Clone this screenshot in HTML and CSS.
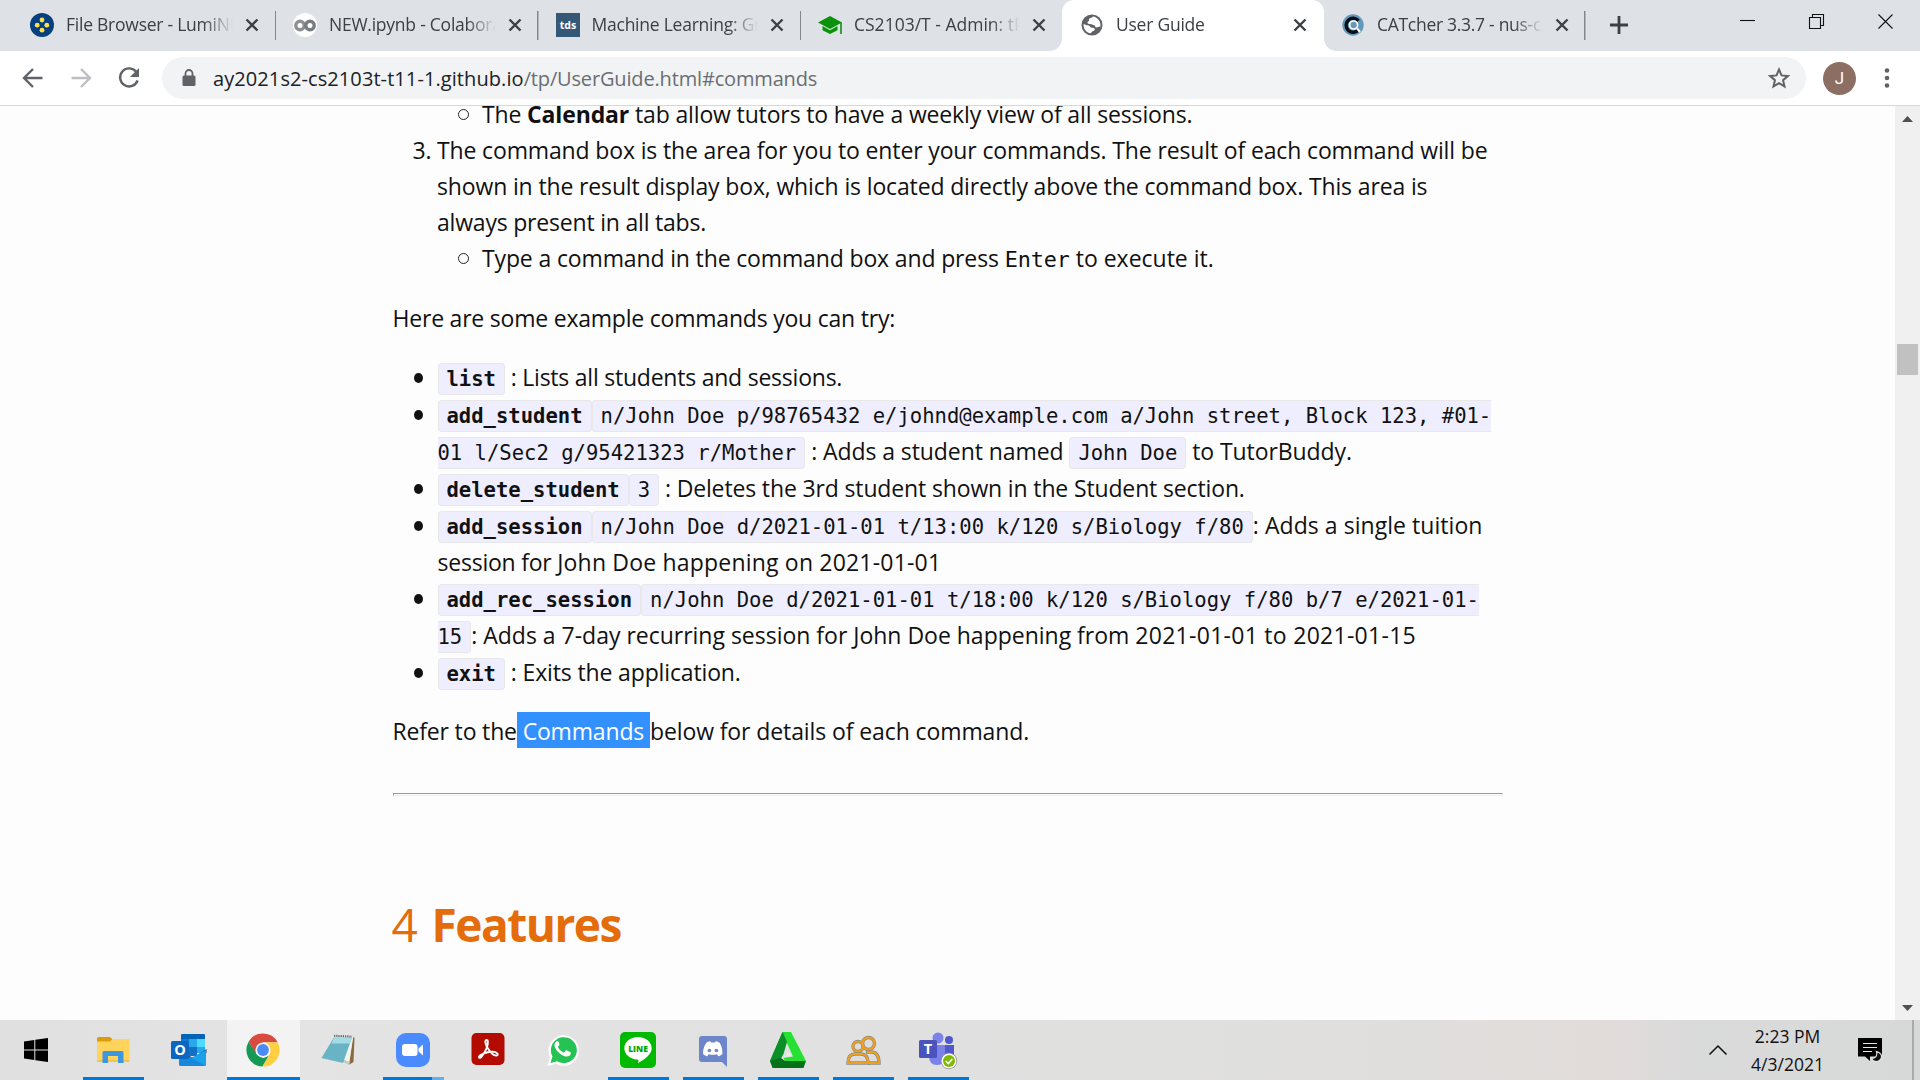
FILE: index.html
```html
<!DOCTYPE html>
<html lang="en">
<head>
<meta charset="utf-8">
<title>User Guide</title>
<link rel="stylesheet" href="styles.css">
</head>
<body>
<div class="screen">
  <header class="tabstrip">
    <div class="tab">
      <svg class="fav" viewBox="0 0 24 24"><circle cx="12" cy="12" r="12" fill="#06407e"/><g fill="#ffdf4f"><circle cx="12" cy="7" r="2.4"/><circle cx="7.2" cy="12.2" r="2.4"/><circle cx="16.8" cy="12.2" r="2.4"/><circle cx="12" cy="17.2" r="2.4"/></g></svg>
      <span class="title">File Browser - LumiNUS</span>
      <svg class="close" viewBox="0 0 14 14"><path d="M1.5 1.5l11 11M12.5 1.5l-11 11"/></svg>
    </div>
    <div class="tab">
      <svg class="fav" viewBox="0 0 24 24"><circle cx="12" cy="12" r="12" fill="#fff"/><g fill="none" stroke-width="3.400"><circle cx="7" cy="12.5" r="4.2" stroke="#8d9194"/><circle cx="17" cy="12.5" r="4.2" stroke="#777c80"/></g></svg>
      <span class="title">NEW.ipynb - Colaboratory</span>
      <svg class="close" viewBox="0 0 14 14"><path d="M1.5 1.5l11 11M12.5 1.5l-11 11"/></svg>
    </div>
    <div class="tab">
      <svg class="fav" viewBox="0 0 24 24"><rect width="24" height="24" fill="#355876"/><text x="12" y="15.6" text-anchor="middle" class="tds">tds</text></svg>
      <span class="title">Machine Learning: Gradient</span>
      <svg class="close" viewBox="0 0 14 14"><path d="M1.5 1.5l11 11M12.5 1.5l-11 11"/></svg>
    </div>
    <div class="tab last">
      <svg class="fav" viewBox="0 0 24 24"><path fill="#0a930a" d="M12 3L0 9.5 12 16l12-6.500zM4.500 13v4.300L12 21l7.500-3.700V13L12 17.300z"/><path stroke="#0a930a" stroke-width="1.600" d="M23 9.500V21"/></svg>
      <span class="title t-cs">CS2103/T - Admin: tP</span>
      <svg class="close" viewBox="0 0 14 14"><path d="M1.5 1.5l11 11M12.5 1.5l-11 11"/></svg>
    </div>
    <div class="tab active">
      <svg class="fav" viewBox="0 0 24 24"><circle cx="12" cy="12" r="10.500" fill="#5f6368"/><path fill="#fff" d="M13.500 3.600c-1 .3-1.500 1.400-3 1.400-1.200 0-1.800 1-1.400 2.200.4 1.100-1.700.9-1.700 2.300 0 1.300 1.400 1.500 3 1.500 1.700 0 2.100 1 3.300 1.100 1.600.1 1 2.100 2.300 2.300 1.300.1 2.300-.8 4.500-.8.4-4.800-2.300-8.800-7-10zM3.600 11c-.3 4.500 2 8 6.400 9.200 1.400.2 1.400-1.100 2.300-1.700 1-.7 2.500-.8 2.500-2.300 0-1.300-1.700-1.500-3.100-1.500-1.500 0-1.400-2-3-2.300-1.700-.3-3.300-.6-5.100-1.400z"/></svg>
      <span class="title">User Guide</span>
      <svg class="close" viewBox="0 0 14 14"><path d="M1.5 1.5l11 11M12.5 1.5l-11 11"/></svg>
    </div>
    <div class="tab">
      <svg class="fav" viewBox="0 0 24 24"><circle cx="12" cy="12" r="10.700" fill="#6299bb"/><path d="M17.500 7.800A7 7 0 1 0 17.600 16.600" fill="none" stroke="#0a0f14" stroke-width="3.400"/><circle cx="12.600" cy="12" r="4" fill="#6299bb" stroke="#fff" stroke-width="1.700"/><path d="M16 15.500l3 3.500" stroke="#fff" stroke-width="2"/></svg>
      <span class="title t-cat">CATcher 3.3.7 - nus-cs2103</span>
      <svg class="close" viewBox="0 0 14 14"><path d="M1.5 1.5l11 11M12.5 1.5l-11 11"/></svg>
    </div>
    <svg class="newtab" viewBox="0 0 18 18"><path d="M9 0v18M0 9h18"/></svg>
    <div class="winbtns">
      <svg width="16" height="16" viewBox="0 0 16 16"><path d="M0 4.500h15"/></svg>
      <svg width="16" height="16" viewBox="0 0 16 16"><path d="M.5 3.500h11v11h-11zM3.500 3.500v-3h11v11h-3"/></svg>
      <svg class="x" width="16" height="16" viewBox="0 0 16 16"><path d="M.5.500l14 14M14.500.500l-14 14"/></svg>
    </div>
  </header>

  <div class="toolbar">
    <nav class="nav">
      <svg width="24" height="24" viewBox="0 0 24 24"><path d="M21.500 12H4M12 3L3 12l9 9"/></svg>
      <svg class="dim" width="24" height="24" viewBox="0 0 24 24"><path d="M2.500 12H20M12 3l9 9-9 9"/></svg>
      <svg width="24" height="24" viewBox="0 0 24 24"><path d="M19.500 6.200A9 9 0 1 0 20.600 14.500"/><path class="solid" d="M22 2v9h-9z"/></svg>
    </nav>
    <div class="omnibox">
      <svg class="lock" width="14" height="18" viewBox="0 0 14 18"><rect x="0.500" y="6.500" width="13" height="10.500" rx="1.500" fill="#5f6368"/><path d="M3.500 7V4.500a3.500 3.500 0 0 1 7 0V7" fill="none" stroke="#5f6368" stroke-width="1.800"/></svg>
      <span class="url"><span class="host">ay2021s2-cs2103t-t11-1.github.io</span><span class="path">/tp/UserGuide.html#commands</span></span>
      <svg class="star" width="22" height="22" viewBox="0 0 22 22"><path d="M11 2.500l2.500 5.900 6.400.55-4.850 4.200 1.450 6.250L11 16.100l-5.500 3.300 1.450-6.250L2.100 8.950l6.400-.55z"/></svg>
    </div>
    <div class="avatar">J</div>
    <svg class="kebab" width="6" height="20" viewBox="0 0 6 20"><circle cx="3" cy="2.500" r="2.300"/><circle cx="3" cy="10" r="2.300"/><circle cx="3" cy="17.500" r="2.300"/></svg>
  </div>

  <div class="viewport">
    <main class="doc">
      <div class="ordered">
        <div class="row nested"><i class="ring"></i>The <b>Calendar</b> tab allow tutors to have a weekly view of all sessions.</div>
        <div class="row item"><span class="num">3.</span>The command box is the area for you to enter your commands. The result of each command will be</div>
        <div class="row item">shown in the result display box, which is located directly above the command box. This area is</div>
        <div class="row item snug">always present in all tabs.</div>
        <div class="row nested"><i class="ring"></i>Type a command in the command box and press <kbd>Enter</kbd><span class="even"> to execute it.</span></div>
      </div>
      <p class="row intro">Here are some example commands you can try:</p>
      <ul class="cmds">
        <li><i class="dot"></i><div class="row"><code><b>list</b></code><span class="tight"> : Lists all students and sessions.</span></div></li>
        <li><i class="dot"></i>
          <div class="row"><code><b>add_student</b></code><code class="open">n/John Doe p/98765432 e/johnd@example.com a/John street, Block 123, #01-</code></div>
          <div class="row"><code class="tail">01 l/Sec2 g/95421323 r/Mother</code><span class="loose"> : Adds a student named </span><code>John Doe</code><span class="loose"> to TutorBuddy.</span></div>
        </li>
        <li><i class="dot"></i><div class="row"><code><b>delete_student</b></code><code>3</code> : Deletes the 3rd student shown in the Student section.</div></li>
        <li><i class="dot"></i>
          <div class="row"><code><b>add_session</b></code><code>n/John Doe d/2021-01-01 t/13:00 k/120 s/Biology f/80</code><span class="wide">: Adds a single tuition</span></div>
          <div class="row plain"><span class="tight">session for </span><span class="date">John Doe happening on 2021-01-01</span></div>
        </li>
        <li><i class="dot"></i>
          <div class="row"><code><b>add_rec_session</b></code><code class="open">n/John Doe d/2021-01-01 t/18:00 k/120 s/Biology f/80 b/7 e/2021-01-</code></div>
          <div class="row"><code class="tail">15</code><span class="even">: Adds a 7-day recurring session for John Doe happening from </span><span class="dates">2021-01-01 to 2021-01-15</span></div>
        </li>
        <li><i class="dot"></i><div class="row"><code><b>exit</b></code> : Exits the application.</div></li>
      </ul>
      <p class="row refer"><span class="lead">Refer to the</span><span class="sel"> Commands </span>below for details of each command.</p>
      <hr>
      <h1><span class="no">4</span><b>Features</b></h1>
    </main>
    <div class="scrollbar">
      <svg width="11" height="6" viewBox="0 0 11 6"><path d="M0 6L5.500 0 11 6z"/></svg>
      <div class="thumb"></div>
      <svg width="11" height="6" viewBox="0 0 11 6"><path d="M0 0L5.500 6 11 0z"/></svg>
    </div>
  </div>

  <footer class="taskbar">
    <div class="slot start"><svg width="24" height="24" viewBox="0 0 24 24"><path d="M0 3.500L10.300 2v9.400H0zM11.300 1.800L24 0v11.400H11.300zM0 12.500h10.300v9.400L0 20.500zM11.300 12.500H24V24l-12.700-1.800z"/></svg></div>
    <div class="slot run"><svg width="36" height="36" viewBox="0 0 36 36"><path fill="#dc9c0a" d="M2 6.500Q2 5 3.500 5H15l2.500 2.500L15 11H2z"/><path fill="#ffd35c" d="M2 9.500h13l2.500-2.500H33q1.500 0 1.500 1.500v20q0 1.500-1.500 1.500H2z"/><path fill="#f6c343" d="M2 28h32.500v1q0 1-1.500 1H3.500Q2 30 2 28z"/><path fill="#3d97e0" d="M7.500 31V20.500Q7.500 19 9 19h18q1.500 0 1.500 1.500V31H23v-7H13v7z"/></svg></div>
    <div class="slot"><svg width="36" height="36" viewBox="0 0 36 36"><path fill="#0364b8" d="M11 3q0-1 1-1h22q1 0 1 1v5H11z"/><path fill="#0f78d4" d="M11 7h8v16h-8z"/><path fill="#28a8ea" d="M19 7h8v8h-8z"/><path fill="#50d9ff" d="M27 7h8v8h-8z"/><path fill="#1470c4" d="M19 15h8v9h-8z"/><path fill="#28a8ea" d="M27 15h8v6h-8z"/><path fill="#0a3f78" d="M9 18l14 8 13.500-9v4L23 30 9 24z"/><path fill="#1ba0ea" d="M36 18v15q0 1-1 1H11q-2 0-2-2v-6l14-1z"/><path fill="#1688dc" d="M9 19l25.500 14.500q-.5.500-1.500.5H11q-2 0-2-2z"/><rect x="1" y="9" width="18" height="18" rx="1.500" fill="#0a66c0"/><text x="10" y="23" text-anchor="middle" class="glyph g14">O</text></svg></div>
    <div class="slot run current"><svg width="36" height="36" viewBox="-18 -18 36 36"><path fill="#db4a3e" d="M-14.400-8.300A16.600 16.600 0 0 1 14.700-7.700H0L-7.200 4z"/><path fill="#ffcf43" d="M14.700-7.700A16.600 16.600 0 0 1-.7 16.600L6.600 4 3-7.700z"/><path fill="#159a56" d="M-.7 16.600A16.600 16.600 0 0 1-14.400-8.300L-6.600 4 0 8 5.500 6z"/><circle r="7.600" fill="#f4f4f4"/><circle r="5.900" fill="#4c8bf5"/></svg></div>
    <div class="slot"><svg width="36" height="36" viewBox="0 0 36 36"><path fill="#8b6b3d" d="M33 5l1.500 1-1 24-5 3z"/><path fill="#f3f3ee" d="M31.500 4.500L33 6l-4 27-9-3z"/><path fill="#c8cac6" d="M20 29l9 4 .5-3-7-3z"/><path fill="#69b4c4" d="M14.500 4.500l17.500 1L23 31 1.500 26z"/><path fill="#a4dbe4" d="M14.500 4.500l17.500 1-2 6-18.500 0z"/><path stroke="#666" stroke-width="2" stroke-dasharray="1.200 1" d="M14 3.700l18 .8"/></svg></div>
    <div class="slot run multi"><svg width="36" height="36" viewBox="0 0 36 36"><rect x="1" y="1" width="34" height="34" rx="10" fill="#4a8cff"/><rect x="7" y="12" width="15.500" height="12" rx="3" fill="#fff"/><path fill="#fff" d="M23.500 16.500L28 12.500v11l-4.500-4z"/></svg></div>
    <div class="slot"><svg width="36" height="36" viewBox="0 0 36 36"><rect x="1.500" y="1" width="33" height="32" rx="5" fill="#b30b00"/><path fill="none" stroke="#fff" stroke-width="1.900" stroke-linejoin="round" d="M16.500 8c-2.200 0-.8 5.200 1.300 8.300 2.700 4.300 6.300 7.700 8.900 7.200 2.500-.8.300-3.800-4.200-3.800-5.500.1-9.500 1.600-12.200 3.600-2.500 2-.9 3.600.9 1.700 3.600-3.900 7.200-11.500 6.700-15.500-.1-1-.6-1.500-1.400-1.500z"/></svg></div>
    <div class="slot"><svg width="36" height="36" viewBox="0 0 36 36"><path fill="#fff" d="M2.500 34l2.500-8.800A15.300 15.300 0 1 1 11 31.700z"/><path fill="#25c254" d="M5.500 31l2-6.500A13 13 0 1 1 12 29.200z"/><path fill="#fff" d="M14 10.500c-.6-1.300-1.200-1.300-2-1.200-1.500.3-2.800 2-2.500 4.500.5 3.500 5.500 9.700 11 10.700 3 .5 5-1 5.300-3 .1-1 0-1.200-.8-1.600l-3-1.500c-.8-.3-1.200-.1-1.700.6-.9 1.300-1.200 1.700-2.300 1.200-2-.9-4-2.800-5-4.900-.3-.7.900-1.500 1.400-2.600.1-.4 0-.7-.4-2.200z"/></svg></div>
    <div class="slot run"><svg width="36" height="36" viewBox="0 0 36 36"><rect width="36" height="36" rx="5" fill="#00b900"/><path fill="#fff" d="M18 5c7.700 0 13.700 5 13.700 11.300 0 6-6.700 10.700-13.700 15 1-2.500.5-3.500-1-3.700C9.500 27 4.300 22 4.300 16.300 4.300 10 10.300 5 18 5z"/><text x="18" y="19.800" text-anchor="middle" class="line">LINE</text></svg></div>
    <div class="slot run"><svg width="36" height="36" viewBox="0 0 36 36"><path fill="#6d86c9" d="M7 4h22q3 0 3 3v28l-5-5H7q-3 0-3-3V7q0-3 3-3z"/><g transform="translate(.7 0)"><path fill="#fff" d="M11 10.500c2-1 3.500-1.200 3.500-1.200l.8 1.200h3.900l.8-1.200s2 .2 4 1.400c2 3.500 3 7.500 2.700 11.200-1.500 1.800-4 2.300-4 2.300l-1.400-2c-2.700.8-5.700.8-8.400 0l-1.300 2s-2.800-.5-4.200-2.300c-.3-3.900.9-8.100 3.600-11.400z"/><circle cx="13.700" cy="18.500" r="1.800" fill="#6d86c9"/><circle cx="20.700" cy="18.500" r="1.800" fill="#6d86c9"/></g></svg></div>
    <div class="slot run"><svg width="36" height="36" viewBox="0 0 36 36"><path fill="#06a22a" d="M12.500 0H21L17 9 9.500 29 3 34 0 29z"/><path fill="#26e034" d="M12.500 0H21L36 29H15l-1.500-3 9.500-1.500L17 11z"/><path fill="#0b8f27" d="M12.500 0L17 10 13.500 22 9 30 0 29z"/><path fill="#047018" d="M0 29l11-3 4 3h21l-2.500 7h-31z"/><path fill="#e8efe8" d="M18.200 19.500l3.300 4-5.500.9z"/></svg></div>
    <div class="slot run"><svg width="36" height="36" viewBox="0 0 36 36"><g fill="#dcdddc" stroke="#8b8b85" stroke-width="3.400"><circle cx="23.500" cy="11.500" r="6"/><path d="M23 31h11q0-11-8-11h-5"/><circle cx="13" cy="14.500" r="5"/><path d="M3 31q0-9 7-9h6q7 0 7 9z"/></g><g fill="none" stroke="#f0a020" stroke-width="2.200"><circle cx="23.500" cy="11.500" r="6"/><path d="M24 31h10q0-11-8-11h-4"/><circle cx="13" cy="14.500" r="5"/><path d="M3 31q0-9 7-9h6q7 0 7 9z"/></g></svg></div>
    <div class="slot run"><svg width="40" height="38" viewBox="0 0 40 38"><circle cx="20" cy="7" r="5.500" fill="#7b83eb"/><circle cx="31" cy="9" r="4" fill="#5059c9"/><path fill="#5059c9" d="M24 14h12v9q0 6-6 6h-6z"/><path fill="#7b83eb" d="M11 14h16v11q0 9-8 9t-8-9z"/><rect x="1" y="9" width="18" height="18" rx="1.500" fill="#4b53bc"/><text x="10" y="23" text-anchor="middle" class="glyph g14">T</text><circle cx="31" cy="30" r="8.200" fill="#8b8d88"/><circle cx="31" cy="30" r="7.500" fill="#fff"/><circle cx="31" cy="30" r="6" fill="#7fba00"/><path d="M27.800 30l2.500 2.500 4-4.500" fill="none" stroke="#fff" stroke-width="1.700"/></svg></div>
    <div class="tray">
      <svg class="chev" width="18" height="10" viewBox="0 0 18 10"><path d="M.5 9.500L9 1l8.500 8.500"/></svg>
      <div class="clock"><span>2:23 PM</span><span>4/3/2021</span></div>
      <svg class="note" width="25" height="25" viewBox="0 0 25 25"><path d="M0 0h24v18.500H12V23l-5-4.500H0z"/><path d="M5 5.500h14M5 9.500h14M5 13.500h9" stroke="#e4e6e5" stroke-width="1.200"/><path d="M18.500 13.500c1.500 4-1 7-5 7 1.500 3 5 4 8 2s3.500-7-3-9z" fill="#111" stroke="#e4e6e5" stroke-width="1.200"/></svg>
      <i class="peek"></i>
    </div>
  </footer>
</div>
</body>
</html>
```
FILE: styles.css
```css
* { box-sizing: border-box; }
html, body { margin: 0; height: 100%; }
body {
  font-family: "Open Sans", "Noto Sans", sans-serif;
  color: #111;
  overflow: hidden;
}
.screen { display: flex; flex-direction: column; width: 1920px; height: 1080px; }
svg { display: block; flex: none; overflow: visible; }

/* Tab strip */
.tabstrip { display: flex; height: 51px; background: #dee1e6; }
.tab {
  display: flex; align-items: center;
  width: 262.5px; height: 51px;
  padding: 0 17px 2px 17px;
  background: linear-gradient(#84888d, #84888d) right 11px / 1.500px 29px no-repeat;
}
.tab:first-child { width: 276px; padding-left: 30px; }
.tab.last { background: none; width: 261px; padding-right: 16px; }
.tab.active {
  width: 262px; padding-left: 18px;
  background: #fff;
  border-radius: 12px 12px 0 0;
  position: relative;
}
.tab.active::before, .tab.active::after {
  content: ""; position: absolute; bottom: 0; width: 12px; height: 12px;
}
.tab.active::before { left: -12px; background: radial-gradient(circle at 0 0, transparent 11.500px, #fff 12px); }
.tab.active::after { right: -12px; background: radial-gradient(circle at 100% 0, transparent 11.500px, #fff 12px); }
.tab.active + .tab { padding-left: 17px; width: 261.500px; }
.fav { width: 24px; height: 24px; }
.tds { font: 700 10.500px "Open Sans", sans-serif; fill: #fff; }
.title {
  flex: 1; margin: -1px 12px 0;
  font-size: 17.500px; letter-spacing: -.24px; line-height: 24px;
  color: #3c4043; white-space: nowrap; overflow: hidden;
  -webkit-mask-image: linear-gradient(90deg, #000 calc(100% - 30px), transparent);
  mask-image: linear-gradient(90deg, #000 calc(100% - 30px), transparent);
}
.t-cs { letter-spacing: 0; }
.t-cat { letter-spacing: -.29px; }
.close { width: 14px; height: 14px; }
.close path { stroke: #3c4043; stroke-width: 2.400; fill: none; }
.newtab { width: 18px; height: 18px; margin: 16px 0 0 24px; }
.newtab path { stroke: #3c4043; stroke-width: 2.800; }
.winbtns { display: flex; gap: 53px; margin: 14px 26px 0 auto; }
.winbtns path { fill: none; stroke: #111; stroke-width: 1.100; }
.winbtns svg:first-child { margin: 2px 0 0; }

/* Toolbar */
.toolbar {
  display: flex; align-items: center;
  height: 55px; background: #fff; border-bottom: 1px solid #d6d8db;
}
.nav { display: flex; gap: 24px; margin-left: 21px; width: 141px; }
.nav path { fill: none; stroke: #5f6368; stroke-width: 2.400; }
.nav .dim path { stroke: #bcbec1; }
.nav .solid { fill: #5f6368; stroke: none; }
.omnibox {
  display: flex; align-items: center;
  width: 1644px; height: 42px; padding: 0 16px 0 20px;
  border-radius: 21px; background: #f1f3f4;
}
.url { flex: 1; margin: 2px 0 0 17px; font-size: 20px; line-height: 28px; white-space: nowrap; }
.host { color: #202124; letter-spacing: .085px; }
.path { color: #6a6e73; letter-spacing: -.16px; }
.star path { fill: none; stroke: #5f6368; stroke-width: 2; }
.avatar {
  width: 33px; height: 33px; margin-left: 17px; border-radius: 50%;
  background: #8d6e63; color: #fff;
  font: 17px/33px Roboto, sans-serif; text-align: center;
}
.kebab { margin-left: 28px; fill: #5f6368; }

/* Page */
.viewport { flex: 1; display: flex; min-height: 0; background: #fdfdfd; overflow: hidden; }
.doc { flex: 1; padding-left: 392.500px; font-size: 23px; letter-spacing: -.142px; }
.row { height: 36px; line-height: 36px; margin: 0; white-space: pre; }
.ordered { margin-top: -10px; }
.nested { padding-left: 89.500px; position: relative; }
.item { padding-left: 44.500px; position: relative; }
.snug { letter-spacing: -.2px; }
.num { position: absolute; left: 20px; }
.ring, .dot { position: absolute; border-radius: 50%; }
.ring { left: 65.500px; top: 13px; width: 11px; height: 11px; border: 1.500px solid #222; }
.even { letter-spacing: -.01px; }
kbd { font: 21.800px "DejaVu Sans Mono", monospace; line-height: 1; letter-spacing: -.1px; }
.intro { margin-top: 24px; letter-spacing: -.215px; }
.cmds { list-style: none; margin: 23px 0 0; padding: 0 0 0 45px; }
.cmds li { position: relative; }
.cmds .row { height: 37px; line-height: 37px; }
.cmds .plain { height: 36px; line-height: 36px; }
.dot { left: -24px; top: 14px; width: 9px; height: 10px; background: #111; }
code {
  font: 20.550px "DejaVu Sans Mono", monospace;
  line-height: 1; letter-spacing: 0;
  padding: 3px 8px; border: 1px solid #e8e8e8; border-radius: 4px;
  background: #eef;
}
code.open { border-right: 0; border-radius: 4px 0 0 4px; padding-right: 0; }
code.tail { border-left: 0; border-radius: 0 4px 4px 0; padding-left: 0; }
.tight { letter-spacing: -.23px; }
.loose { letter-spacing: -.08px; }
.wide { letter-spacing: .05px; }
.date { letter-spacing: .19px; }
.dates { letter-spacing: .28px; }
.refer { margin-top: 22px; letter-spacing: -.1px; }
.lead, .sel { letter-spacing: -.17px; }
.sel { display: inline-block; height: 36px; margin-top: -1px; background: #3390ff; color: #fff; vertical-align: top; line-height: 38px; }
hr { width: 1110px; height: 3px; margin: 44px 0 0; border: 1px solid; border-color: #9a9a9a #eee #eee #9a9a9a; }
h1 { margin: 95px 0 0; font-size: 46px; line-height: 66px; font-weight: 400; color: #e46c0a; }
h1 .no { display: inline-block; width: 39px; margin-left: -1px; padding-right: 1px; }
h1 b { margin-left: 1px; letter-spacing: -1.500px; }

.scrollbar { display: flex; flex-direction: column; align-items: center; width: 25px; padding: 10px 0 9px; background: #f0f0f0; fill: #505050; }
.thumb { width: 21px; height: 31px; margin: 222px 0 auto; background: #c1c1c1; }

/* Taskbar */
.taskbar {
  display: flex; height: 60px; flex: none;
  background: linear-gradient(90deg, #dfe0df 0, #e3e4e3 15%, #dfe0df 50%, #e0dfde 70%, #e1dcda 84%, #dadadb 88%, #d7d9d8 100%);
}
.slot { display: flex; align-items: center; justify-content: center; width: 75px; padding-right: 2px; position: relative; }
.start { width: 72px; margin-right: 4px; padding-right: 0; }
.run::after { content: ""; position: absolute; left: 7px; right: 7px; bottom: 0; height: 3px; background: #0078d7; }
.current { background: linear-gradient(90deg, transparent 1px, #f3f3f3 1px, #f3f3f3 74px, transparent 74px); }
.current::after { left: 1px; right: 1px; }
.multi::after { background: linear-gradient(90deg, #0078d7 49px, #66aee6 49px); }
.glyph { font-family: "Open Sans", sans-serif; font-weight: 700; fill: #fff; }
.g14 { font-size: 14.500px; }
.line { font: 800 8.500px "Open Sans", sans-serif; fill: #00a800; }
.tray { display: flex; align-items: center; margin-left: auto; }
.chev path { fill: none; stroke: #111; stroke-width: 1.500; }
.chev { margin-top: -1px; }
.clock { display: flex; flex-direction: column; width: 121px; text-align: center; font-size: 17.500px; line-height: 28px; color: #111; }
.note { margin: 0 29px 0 10px; }
.peek { width: 2px; height: 60px; margin-right: 6px; background: #a9abaa; }
```
